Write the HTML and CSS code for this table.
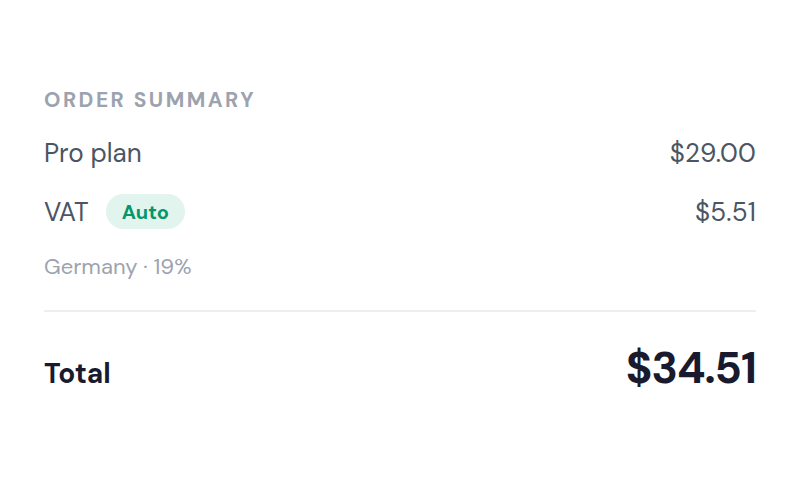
FILE: index.html
```html
<!DOCTYPE html>
<html>
<head>
<meta charset="utf-8">
<link rel="stylesheet" href="styles.css">
</head>
<body>
<main class="summary">
  <h2 class="title">ORDER SUMMARY</h2>
  <div class="row row-plan">
    <span class="label">Pro plan</span>
    <span class="amount">$29.00</span>
  </div>
  <div class="row row-vat">
    <span class="label-group">
      <span class="label">VAT</span>
      <span class="badge">Auto</span>
    </span>
    <span class="amount">$5.51</span>
  </div>
  <div class="note">Germany · 19%</div>
  <hr class="divider">
  <div class="row row-total">
    <span class="total-label">Total</span>
    <span class="total-amount">$34.51</span>
  </div>
</main>
</body>
</html>
```
FILE: styles.css
```css
html, body {
  margin: 0;
  padding: 0;
  background: #ffffff;
}
body {
  font-family: "DM Sans", Inter, "Liberation Sans", sans-serif;
  width: 800px;
  height: 480px;
}
.summary {
  padding: 88px 44px 0 44px;
  display: flex;
  flex-direction: column;
}
.title {
  margin: 0;
  font-size: 21px;
  line-height: 24px;
  font-weight: 700;
  letter-spacing: 2.45px;
  color: #9ca3af;
}
.row {
  display: flex;
  justify-content: space-between;
  align-items: center;
}
.row-plan {
  margin-top: 24px;
  height: 34px;
}
.row-vat {
  margin-top: 24px;
  height: 35px;
}
.label-group {
  display: flex;
  align-items: center;
  gap: 17px;
}
.label, .amount {
  font-size: 26px;
  color: #4b5563;
  line-height: 34px;
}
.amount {
  letter-spacing: 0.2px;
}
.badge {
  display: inline-flex;
  align-items: center;
  height: 35px;
  padding: 0 16px;
  border-radius: 18px;
  background: #e1f5ee;
  color: #059669;
  font-size: 20px;
  font-weight: 700;
  letter-spacing: 0.1px;
}
.note {
  margin-top: 26px;
  font-size: 22px;
  line-height: 24px;
  color: #9ca3af;
}
.divider {
  margin: 31px 0 0 0;
  border: 0;
  height: 2px;
  background: #ededf2;
}
.row-total {
  margin-top: 30px;
  align-items: baseline;
}
.total-label {
  font-size: 28px;
  line-height: 52px;
  font-weight: 700;
  color: #1a1a2e;
}
.total-amount {
  font-size: 44px;
  line-height: 52px;
  font-weight: 700;
  color: #1a1a2e;
  letter-spacing: -1px;
}
```
